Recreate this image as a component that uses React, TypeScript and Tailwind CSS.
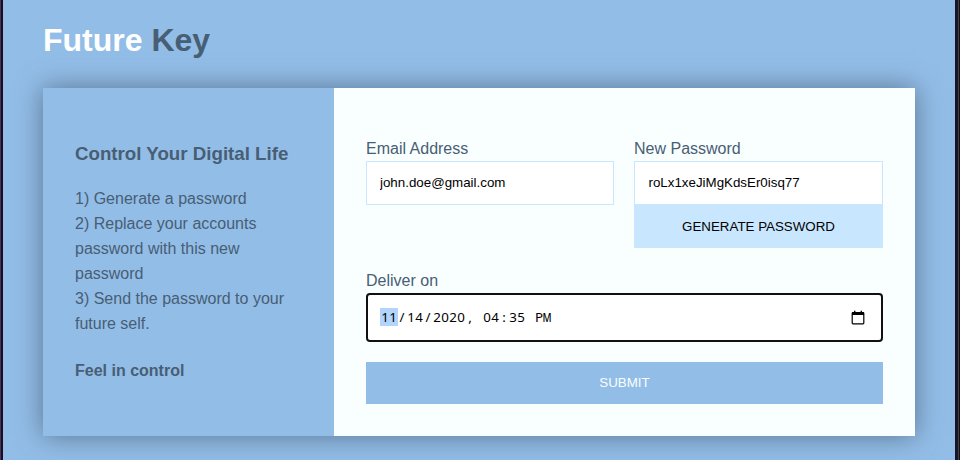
import React from "react";

const DATE_PARTS: { text: string; kind: "field" | "active" | "sep" }[] = [
  { text: "11", kind: "active" },
  { text: "/", kind: "sep" },
  { text: "14", kind: "field" },
  { text: "/", kind: "sep" },
  { text: "2020", kind: "field" },
  { text: ", ", kind: "sep" },
  { text: "04", kind: "field" },
  { text: ":", kind: "sep" },
  { text: "35", kind: "field" },
  { text: " ", kind: "sep" },
  { text: "PM", kind: "field" },
];

// Sets every character in a cell of equal width; the wide M is condensed to fit.
function Cells({ text }: { text: string }) {
  return (
    <>
      {text.split("").map((c, i) => (
        <span key={i} className="flex w-2 justify-center whitespace-pre">
          <span className={c === "M" ? "scale-x-[0.74] font-medium" : ""}>{c}</span>
        </span>
      ))}
    </>
  );
}

function DateField() {
  return (
    <div className="flex h-[49px] items-center justify-between rounded-[4px] border-2 border-[#101010] bg-white pr-4 pl-3">
      <div className="mb-0.5 flex font-['Noto_Sans',sans-serif] text-[13.33px] leading-[18px] text-black">
        {DATE_PARTS.map((p, i) => (
          <span
            key={i}
            className={
              p.kind === "sep" ? "flex" : p.kind === "active" ? "flex bg-[#b3d4fd] px-px" : "flex px-px"
            }
          >
            <Cells text={p.text} />
          </span>
        ))}
      </div>
      <svg width="14" height="15" viewBox="0 0 14 15" aria-hidden="true">
        <path d="M3 0.8h1.4V2H3zM9.6 0.8H11V2H9.6z" fill="#000" />
        <rect x="1.2" y="2.6" width="11.6" height="11.2" rx="0.8" fill="none" stroke="#000" strokeWidth="1.2" />
        <path d="M1 2h12v3H1z" fill="#000" />
      </svg>
    </div>
  );
}

const inputClass =
  "block h-11 w-full rounded-none border border-[#c9e6ff] bg-white pr-[13px] pb-px text-[13.33px] text-black outline-none";

export default function App() {
  return (
    <div className="flex h-[460px] w-[960px] overflow-hidden bg-[#92bde7] font-['Liberation_Sans',Arial,sans-serif] text-base text-[#485e74]">
      <div className="w-px shrink-0 bg-[#45384f]" />
      <div className="w-0.5 shrink-0 bg-[#1c0c28]" />
      <main className="w-[952px] px-10 pt-5">
        <h1 className="h-[68px] text-[32px] leading-10 font-bold">
          <span className="text-white">Future</span> Key
        </h1>
        <div className="flex h-[348px] w-[872px] shadow-[0_0_25px_0_rgba(72,94,116,0.75)]">
          <aside className="w-[291px] shrink-0 bg-[#92bde7] px-8 pt-[51px]">
            <h3 className="text-[18.72px] leading-[30px] font-bold whitespace-nowrap">Control Your Digital Life</h3>
            <p className="mt-[17px] leading-[25px]">
              1) Generate a password
              <br />
              2) Replace your accounts password with this new password
              <br />
              3) Send the password to your future self.
            </p>
            <p className="mt-[22px] leading-[25px] font-bold">Feel in control</p>
          </aside>
          <form className="w-[581px] bg-[#f9feff] px-8 pt-12">
            <div className="grid grid-cols-[248px_249px] gap-x-5">
              <label className="block">
                <span className="block h-[25px] leading-[25px]">Email Address</span>
                <input className={`${inputClass} pl-[13px]`} defaultValue="john.doe@gmail.com" />
              </label>
              <div>
                <label className="block">
                  <span className="block h-[25px] leading-[25px]">New Password</span>
                  <input className={`${inputClass} pl-[13.5px]`} defaultValue="roLx1xeJiMgKdsEr0isq77" />
                </label>
                <button type="button" className="block h-[43px] w-full bg-[#c9e6ff] text-[13.33px] text-black">
                  GENERATE PASSWORD
                </button>
              </div>
            </div>
            <div className="mt-5">
              <span className="block h-[25px] leading-[25px]">Deliver on</span>
              <DateField />
            </div>
            <button type="button" className="mt-5 block h-[42px] w-full bg-[#92bde7] text-[13.33px] text-[#f9feff]">
              SUBMIT
            </button>
          </form>
        </div>
      </main>
      <div className="w-[3px] shrink-0 bg-[#19132b]" />
      <div className="w-px shrink-0 bg-[#444444]" />
      <div className="w-px shrink-0 bg-[#111111]" />
    </div>
  );
}
